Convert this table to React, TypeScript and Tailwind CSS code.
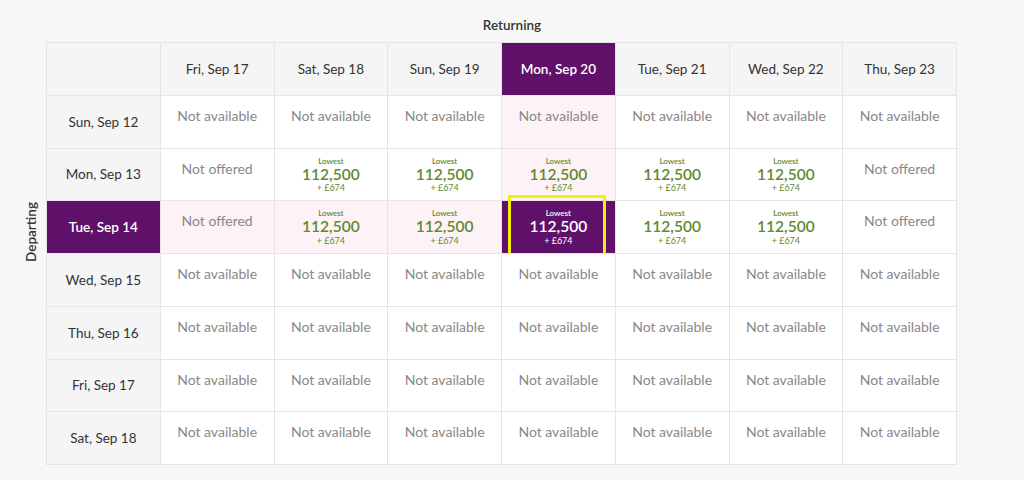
import React from 'react';

const returning = ['Fri, Sep 17', 'Sat, Sep 18', 'Sun, Sep 19', 'Mon, Sep 20', 'Tue, Sep 21', 'Wed, Sep 22', 'Thu, Sep 23'];
const departing = ['Sun, Sep 12', 'Mon, Sep 13', 'Tue, Sep 14', 'Wed, Sep 15', 'Thu, Sep 16', 'Fri, Sep 17', 'Sat, Sep 18'];

type Cell = 'na' | 'no' | 'price';

const NA: Cell[] = ['na', 'na', 'na', 'na', 'na', 'na', 'na'];
const grid: Cell[][] = [
  NA,
  ['no', 'price', 'price', 'price', 'price', 'price', 'no'],
  ['no', 'price', 'price', 'price', 'price', 'price', 'no'],
  NA,
  NA,
  NA,
  NA,
];

const SEL_ROW = 2;
const SEL_COL = 3;

function Price({ selected }: { selected: boolean }) {
  const color = selected ? 'text-white' : 'text-[#5e8a30]';
  return (
    <div className={`flex flex-col items-center pt-[8px] leading-none ${color}`}>
      <span className="text-[8px] font-semibold">Lowest</span>
      <span className="mt-[2px] text-[15.5px] font-semibold">112,500</span>
      <span className="mt-[1px] text-[9px]">+ £674</span>
    </div>
  );
}

export default function App() {
  return (
    <div className="h-[480px] w-[1024px] bg-[#f7f7f7] font-['Lato',sans-serif]">
      <div className="flex h-[42px] items-center justify-center pt-[9px] text-[13.5px] font-semibold text-[#333]">
        Returning
      </div>
      <div className="flex">
        <div className="flex w-[46px] items-start justify-end pr-[5px] pt-[160px]">
          <span className="rotate-180 whitespace-nowrap text-[13.5px] font-semibold text-[#333] [writing-mode:vertical-rl]">
            Departing
          </span>
        </div>
        <div className="grid h-[423px] w-[911px] grid-cols-8 grid-rows-8 gap-px bg-[#e5e5e5] p-px">
          <div className="bg-[#f5f5f5]" />
          {returning.map((d, i) => (
            <div
              key={d}
              className={`flex items-center justify-center text-[13.5px] ${
                i === SEL_COL ? 'bg-[#5f1068] font-semibold text-white' : 'bg-[#f5f5f5] text-[#333]'
              }`}
            >
              {d}
            </div>
          ))}
          {departing.map((d, r) => (
            <React.Fragment key={d + r}>
              <div
                className={`flex items-center justify-center text-[13.5px] ${
                  r === SEL_ROW ? 'bg-[#5f1068] font-semibold text-white' : 'bg-[#f5f5f5] text-[#333]'
                }`}
              >
                {d}
              </div>
              {grid[r].map((c, ci) => {
                const selected = r === SEL_ROW && ci === SEL_COL;
                const tinted = (r === SEL_ROW && ci < SEL_COL) || (ci === SEL_COL && r < SEL_ROW);
                const bg = selected ? 'bg-[#5f1068]' : tinted ? 'bg-[#fdf3f6]' : 'bg-white';
                return (
                  <div key={ci} className={`relative flex justify-center ${bg}`}>
                    {c === 'price' ? (
                      <Price selected={selected} />
                    ) : (
                      <span className="pt-[9px] text-[14px] text-[#888]">
                        {c === 'na' ? 'Not available' : 'Not offered'}
                      </span>
                    )}
                    {selected && (
                      <div className="absolute -top-[6px] -bottom-[5px] left-[6px] right-[9px] border-[3px] border-[#f4ee0c]" />
                    )}
                  </div>
                );
              })}
            </React.Fragment>
          ))}
        </div>
      </div>
    </div>
  );
}
